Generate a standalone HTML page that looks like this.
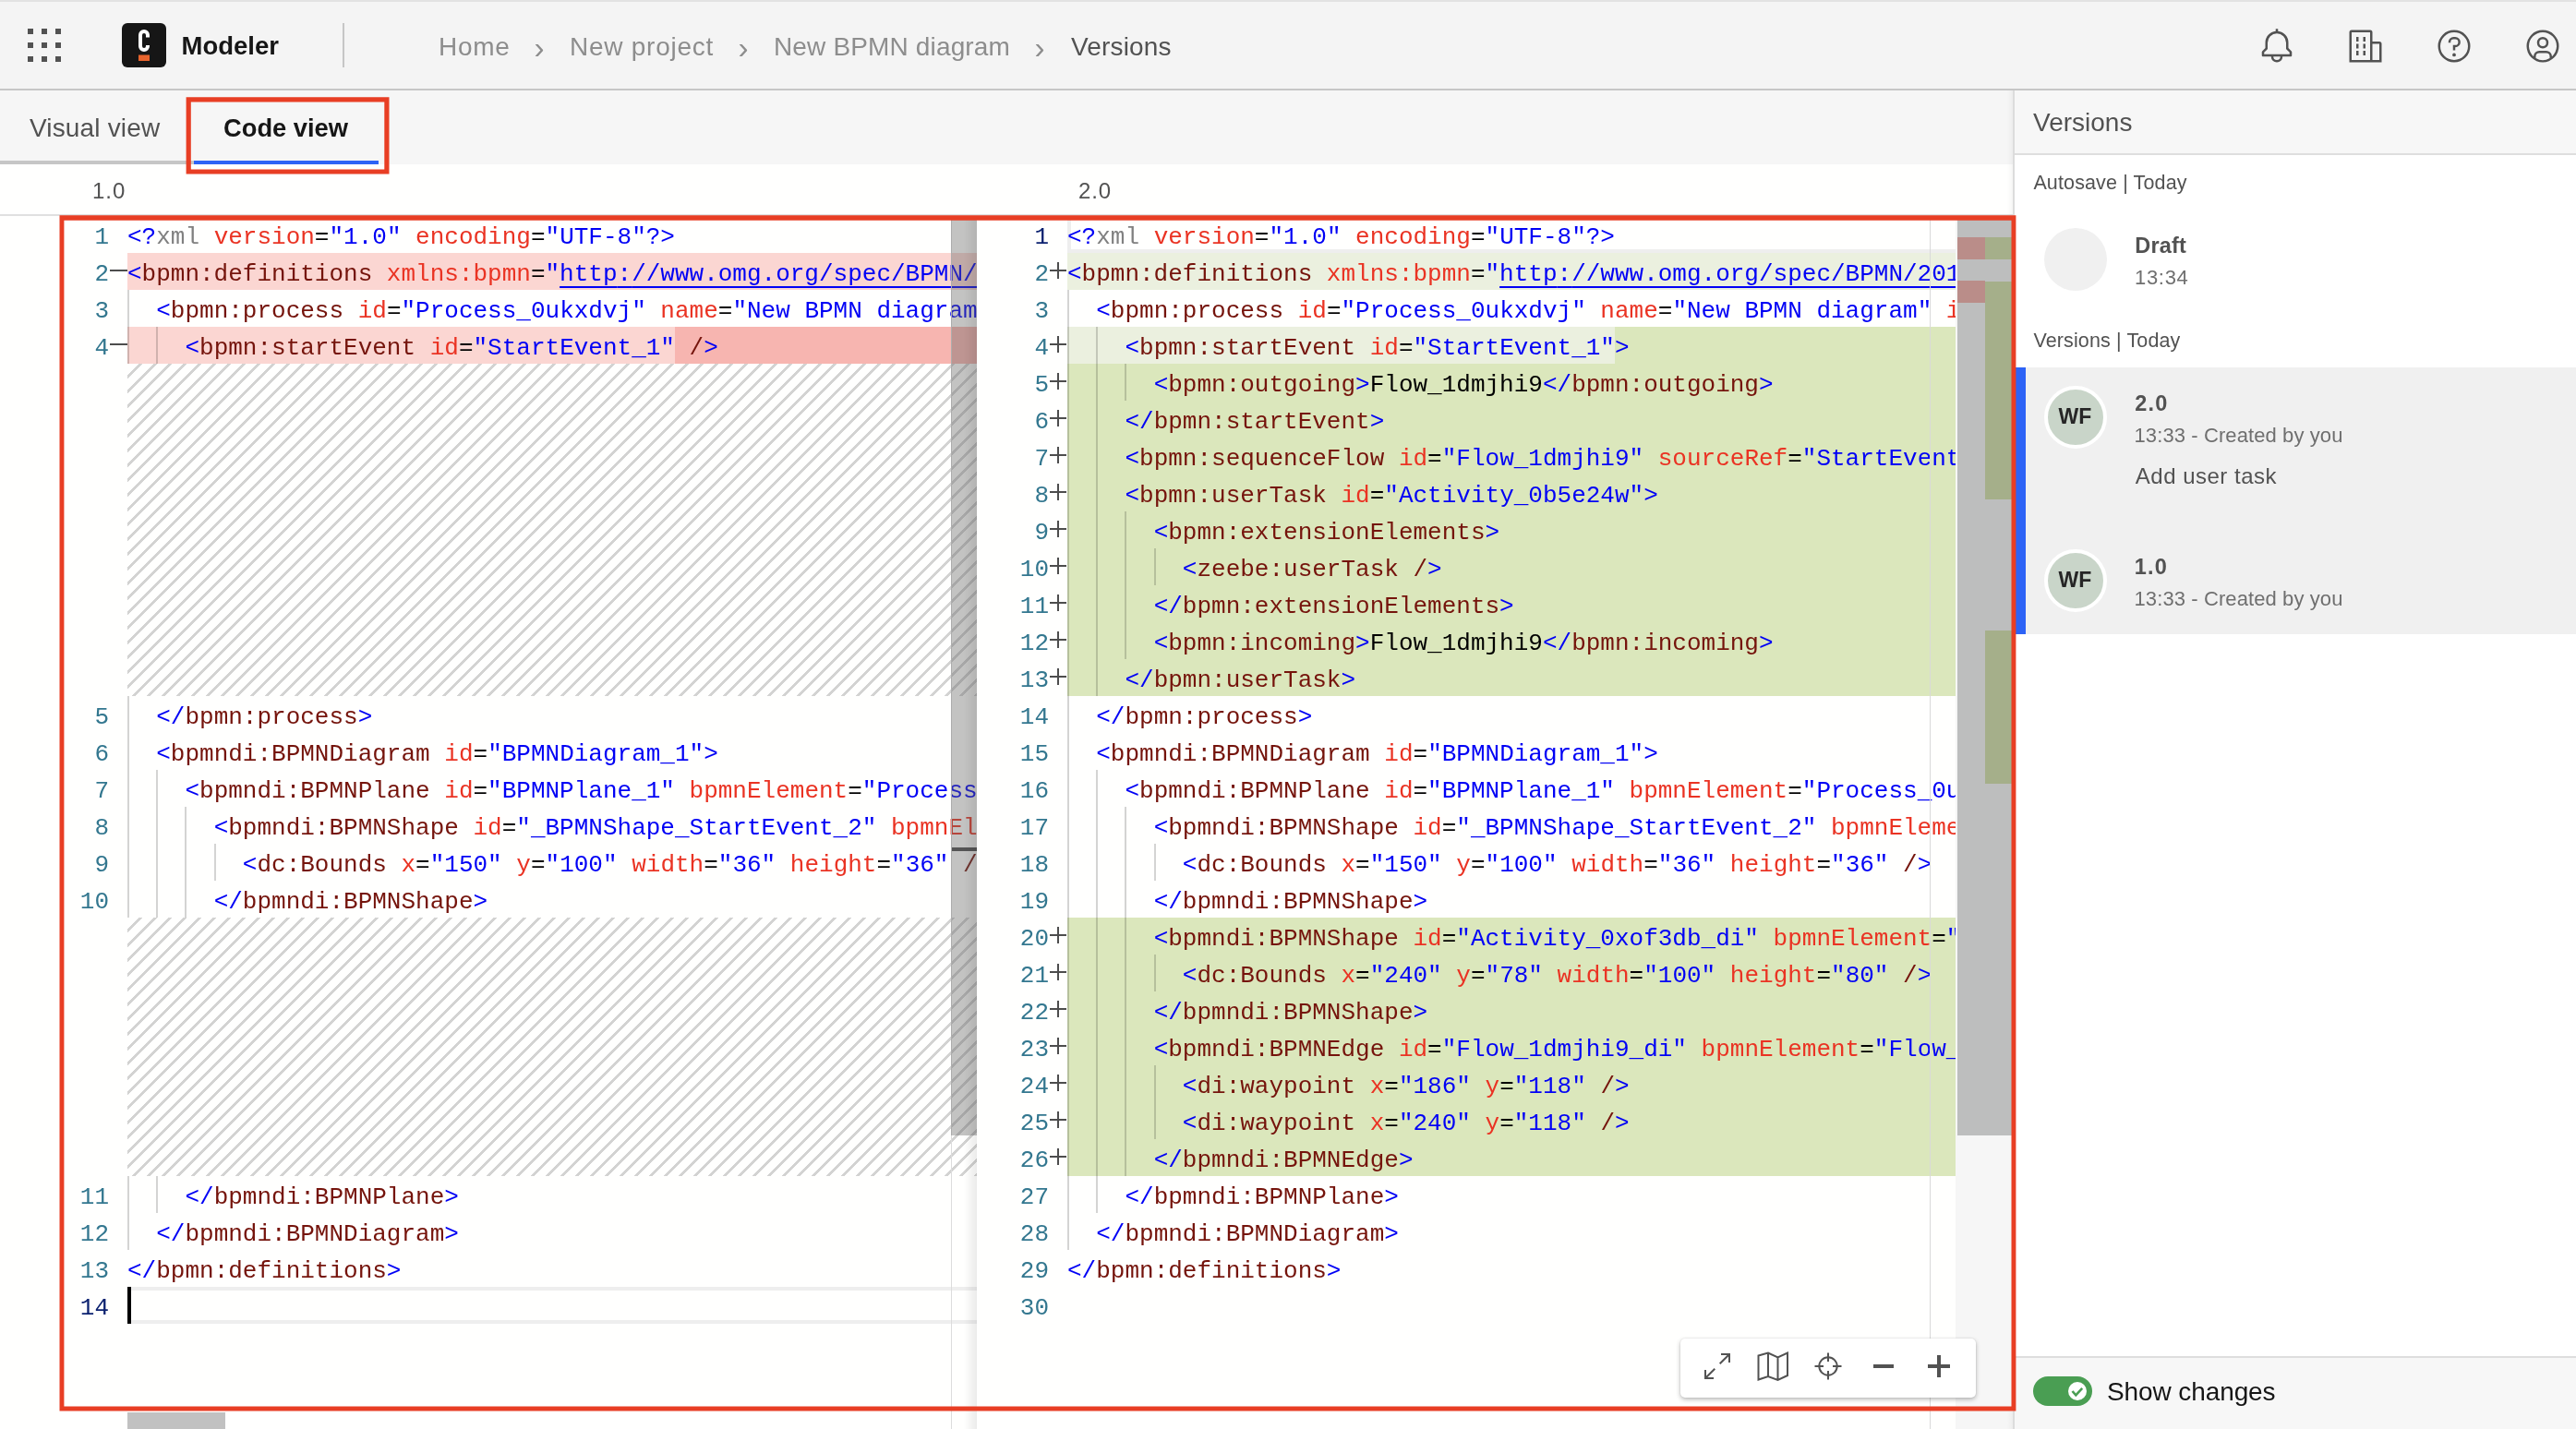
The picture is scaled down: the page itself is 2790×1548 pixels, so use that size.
<!DOCTYPE html>
<html lang="en">
<head>
<meta charset="utf-8">
<title>Modeler - Versions</title>
<style>
html,body{margin:0;padding:0}
body{width:2790px;height:1548px;overflow:hidden;position:relative;background:#fffffe;
  font-family:"Liberation Sans",sans-serif;color:#161616}
#header,#tabbar,#left,#right,#sidebar,.etitle{will-change:transform}
.abs{position:absolute}
/* header */
#topstrip{position:absolute;left:0;top:0;width:2790px;height:2px;background:#e2e2e2;z-index:5}
#header{position:absolute;left:0;top:0;width:2790px;height:96px;background:#f4f4f4;border-bottom:2px solid #c6c6c6}
#header .txt{position:absolute;top:0;height:96px;line-height:101px;font-size:28px;white-space:nowrap}
.crumb{color:#8d8d8d}
.sep{color:#8d8d8d}
/* tab bar */
#tabbar{position:absolute;left:0;top:98px;width:2181px;height:80px;background:#f6f6f6}
#tabbar .tab{position:absolute;top:0;height:76px;line-height:60px;font-size:28px;white-space:nowrap}
/* editor titles */
.etitle{position:absolute;top:190px;height:34px;line-height:34px;font-size:24px;color:#525252}
/* code */
.cl,.ln{position:absolute;height:40px;line-height:40px;font-family:"Liberation Mono",monospace;font-size:26px;white-space:pre;overflow:hidden}
.cl{padding-top:0}
.cl>span{position:relative}
.cl>span{top:3px}
.ln{text-align:right;color:#33778f}
.ln.act{color:#0b216f}
.ln{padding-top:3px;box-sizing:border-box}
.d{color:#0000f5}.t{color:#75140c}.a{color:#ea3323}.v{color:#0000f5}.m{color:#808080}.x{color:#000}
.u{text-decoration:underline;text-decoration-thickness:2px;text-underline-offset:5.5px;text-decoration-skip-ink:none}
.bg{position:absolute;height:40px}
.rl{background:#fbd6d2}
.rc{background:#f7b5b0}
.gl{background:#ebf0df}
.gc{background:#dbe7bc}
.hatch{position:absolute;background-image:linear-gradient(-45deg,rgba(34,34,34,.2) 12.5%,transparent 12.5%,transparent 50%,rgba(34,34,34,.2) 50%,rgba(34,34,34,.2) 62.5%,transparent 62.5%,transparent 100%);background-size:16px 16px}
.guide{position:absolute;width:2px;height:40px;background:rgba(0,0,0,.17)}
.curline{position:absolute;height:40px;box-sizing:border-box;border:4px solid #eeeeee;border-right:0}
.mark{position:absolute;width:18px;height:40px}
.mark::before{content:"";position:absolute;left:0;top:18px;width:100%;height:2px;background:#4d4d4d}
.mark.minus{width:19px}
.mark.plus::after{content:"";position:absolute;left:8px;top:10px;width:2px;height:18px;background:#4d4d4d}
/* red annotation boxes */
.redbox{position:absolute;box-sizing:border-box;border:5px solid #e83e24;z-index:20;pointer-events:none}
/* sidebar */
#sidebar{position:absolute;left:2180px;top:98px;width:610px;height:1450px;background:#fff}
#sidebar .st{position:absolute;white-space:nowrap;color:#525252}
</style>
</head>
<body>
<div id="header">
  <!-- app switcher -->
  <svg class="abs" style="left:24px;top:25px" width="48" height="48" viewBox="0 0 32 32" fill="#525252"><path d="M14 4h4v4h-4zM4 4h4v4H4zm20 0h4v4h-4zM14 14h4v4h-4zM4 14h4v4H4zm20 0h4v4h-4zM14 24h4v4h-4zM4 24h4v4H4zm20 0h4v4h-4z"/></svg>
  <!-- logo -->
  <svg class="abs" style="left:132px;top:25px" width="48" height="48" viewBox="0 0 48 48"><rect width="48" height="48" rx="6" fill="#161616"/><path d="M28 15.5V13a4 4 0 0 0-8 0v12a4 4 0 0 0 8 0v-1" transform="translate(0,0)" fill="none" stroke="#fff" stroke-width="4"/><rect x="18" y="34.5" width="12" height="6.5" fill="#e8642d"/></svg>
  <div class="txt" style="left:196.5px;font-weight:bold;color:#161616;font-size:27.5px;line-height:99px">Modeler</div>
  <div class="abs" style="left:371px;top:25px;width:2px;height:48px;background:#c6c6c6"></div>
  <div class="txt crumb" style="left:475px;letter-spacing:.7px">Home</div>
  <div class="txt sep" style="left:578.5px;font-size:33px;line-height:103px">›</div>
  <div class="txt crumb" style="left:617px;letter-spacing:.74px">New project</div>
  <div class="txt sep" style="left:799.5px;font-size:33px;line-height:103px">›</div>
  <div class="txt crumb" style="left:838px;letter-spacing:.15px">New BPMN diagram</div>
  <div class="txt sep" style="left:1120.5px;font-size:33px;line-height:103px">›</div>
  <div class="txt" style="left:1160px;color:#525252;letter-spacing:.15px">Versions</div>
  <!-- right icons -->
  <svg class="abs" style="left:2446px;top:30px" width="40" height="40" viewBox="0 0 32 32" fill="#525252"><path d="M28.7 20.3 26 17.6V13a10.070 10.070 0 0 0-9-10V1h-2v2a10.150 10.150 0 0 0-9 10v4.600l-2.700 2.700a.910.910 0 0 0-.3.700v3a.940.940 0 0 0 1 1h7a5 5 0 0 0 10 0h7a.940.940 0 0 0 1-1v-3a.910.910 0 0 0-.3-.700ZM16 28a3 3 0 0 1-3-3h6a3 3 0 0 1-3 3Zm11-5H5v-1.600l2.700-2.700a.910.910 0 0 0 .3-.700v-5a8 8 0 0 1 16 0v5a.910.910 0 0 0 .3.700l2.700 2.700Z"/></svg>
  <svg class="abs" style="left:2542px;top:30px" width="40" height="40" viewBox="0 0 32 32" fill="#525252"><path d="M8 8h2v4H8zm0 6h2v4H8zm6-6h2v4h-2zm0 6h2v4h-2zm-6 6h2v4H8zm6 0h2v4h-2z"/><path d="M30 14a2 2 0 0 0-2-2h-6V4a2 2 0 0 0-2-2H4a2 2 0 0 0-2 2v26h28ZM4 4h16v24H4Zm18 24V14h6v14Z"/></svg>
  <svg class="abs" style="left:2638px;top:30px" width="40" height="40" viewBox="0 0 32 32" fill="#525252"><path d="M16 2a14 14 0 1 0 14 14A14 14 0 0 0 16 2Zm0 26a12 12 0 1 1 12-12 12 12 0 0 1-12 12Z"/><circle cx="16" cy="23.5" r="1.5"/><path d="M17 8h-1.500a4.490 4.490 0 0 0-4.500 4.500v.500h2v-.500a2.500 2.500 0 0 1 2.500-2.500H17a2.500 2.500 0 0 1 0 5h-2v4.500h2V17a4.500 4.500 0 0 0 0-9Z"/></svg>
  <svg class="abs" style="left:2734px;top:30px" width="40" height="40" viewBox="0 0 32 32" fill="#525252"><path d="M16 8a5 5 0 1 0 5 5 5 5 0 0 0-5-5Zm0 8a3 3 0 1 1 3-3 3.003 3.003 0 0 1-3 3Z"/><path d="M16 2a14 14 0 1 0 14 14A14.016 14.016 0 0 0 16 2Zm-6 24.377V25a3.003 3.003 0 0 1 3-3h6a3.003 3.003 0 0 1 3 3v1.377a11.899 11.899 0 0 1-12 0Zm13.993-1.451A5.002 5.002 0 0 0 19 20h-6a5.002 5.002 0 0 0-4.992 4.926 12 12 0 1 1 15.985 0Z"/></svg>
</div>
<div id="topstrip"></div>

<div id="tabbar">
  <div class="abs" style="left:0;top:76px;width:210px;height:4px;background:#c6c6c6"></div>
  <div class="abs" style="left:210px;top:76px;width:200px;height:4px;background:#2d63f6"></div>
  <div class="tab" style="left:32px;top:11px;color:#525252;letter-spacing:.16px">Visual view</div>
  <div class="tab" style="left:242px;top:11px;color:#161616;font-weight:bold;font-size:27.3px">Code view</div>
</div>
<svg class="abs" style="left:0;top:0;z-index:20" width="2790" height="1548"><path fill="#e83e24" fill-rule="evenodd" d="M201.600 105.300H421.500V188.600H201.600ZM206.800 110.500V183.400H416.300V110.500Z"/><path fill="#e83e24" fill-rule="evenodd" d="M64.500 233.200H2183.400V1528.400H64.500ZM69.400 238.800V1523.500H2178.500V238.800Z"/></svg>

<!-- editor titles -->
<div class="etitle" style="left:99.5px;letter-spacing:1px">1.0</div>
<div class="etitle" style="left:1168px;letter-spacing:.9px">2.0</div>
<div class="abs" style="left:0;top:232px;width:2181px;height:2px;background:#e0e0e0"></div>

<!-- editors -->
<div id="left" class="abs" style="left:0;top:0;width:1058px;height:1548px;overflow:hidden">
<div class="bg rl" style="top:274px;left:138px;width:920px"></div>
<div class="bg rl" style="top:354px;left:138px;width:920px"></div>
<div class="bg rc" style="top:354px;left:730.8px;width:327.2px"></div>
<div class="hatch" style="top:394px;left:138px;width:920px;height:360px"></div>
<div class="hatch" style="top:994px;left:138px;width:920px;height:280px"></div>
<div class="curline" style="top:1394px;left:138px;width:920px"></div>
<div class="ln" style="top:234px;left:38px;width:80px">1</div>
<div class="cl" style="top:234px;left:138px;width:920px"><span class="d">&lt;?</span><span class="m">xml</span> <span class="a">version</span><span class="x">=</span><span class="v">"1.0"</span> <span class="a">encoding</span><span class="x">=</span><span class="v">"UTF-8"</span><span class="d">?&gt;</span></div>
<div class="ln" style="top:274px;left:38px;width:80px">2</div>
<div class="mark minus" style="top:274px;left:119px"></div>
<div class="cl" style="top:274px;left:138px;width:920px"><span class="d">&lt;</span><span class="t">bpmn:definitions</span> <span class="a">xmlns:bpmn</span><span class="x">=</span><span class="v">"</span><span class="v u">http<span>:</span>//www.omg.org/spec/BPMN/20100524/MODEL</span><span class="v">"</span><span class="d">&gt;</span></div>
<div class="guide" style="top:314px;left:138.0px"></div>
<div class="ln" style="top:314px;left:38px;width:80px">3</div>
<div class="cl" style="top:314px;left:138px;width:920px">  <span class="d">&lt;</span><span class="t">bpmn:process</span> <span class="a">id</span><span class="x">=</span><span class="v">"Process_0ukxdvj"</span> <span class="a">name</span><span class="x">=</span><span class="v">"New BPMN diagram"</span> <span class="a">isExecutable</span><span class="x">=</span><span class="v">"true"</span><span class="d">&gt;</span></div>
<div class="guide" style="top:354px;left:138.0px"></div>
<div class="guide" style="top:354px;left:169.2px"></div>
<div class="ln" style="top:354px;left:38px;width:80px">4</div>
<div class="mark minus" style="top:354px;left:119px"></div>
<div class="cl" style="top:354px;left:138px;width:920px">    <span class="d">&lt;</span><span class="t">bpmn:startEvent</span> <span class="a">id</span><span class="x">=</span><span class="v">"StartEvent_1"</span> <span class="t">/</span><span class="d">&gt;</span></div>
<div class="guide" style="top:754px;left:138.0px"></div>
<div class="ln" style="top:754px;left:38px;width:80px">5</div>
<div class="cl" style="top:754px;left:138px;width:920px">  <span class="d">&lt;/</span><span class="t">bpmn:process</span><span class="d">&gt;</span></div>
<div class="guide" style="top:794px;left:138.0px"></div>
<div class="ln" style="top:794px;left:38px;width:80px">6</div>
<div class="cl" style="top:794px;left:138px;width:920px">  <span class="d">&lt;</span><span class="t">bpmndi:BPMNDiagram</span> <span class="a">id</span><span class="x">=</span><span class="v">"BPMNDiagram_1"</span><span class="d">&gt;</span></div>
<div class="guide" style="top:834px;left:138.0px"></div>
<div class="guide" style="top:834px;left:169.2px"></div>
<div class="ln" style="top:834px;left:38px;width:80px">7</div>
<div class="cl" style="top:834px;left:138px;width:920px">    <span class="d">&lt;</span><span class="t">bpmndi:BPMNPlane</span> <span class="a">id</span><span class="x">=</span><span class="v">"BPMNPlane_1"</span> <span class="a">bpmnElement</span><span class="x">=</span><span class="v">"Process_0ukxdvj"</span><span class="d">&gt;</span></div>
<div class="guide" style="top:874px;left:138.0px"></div>
<div class="guide" style="top:874px;left:169.2px"></div>
<div class="guide" style="top:874px;left:200.4px"></div>
<div class="ln" style="top:874px;left:38px;width:80px">8</div>
<div class="cl" style="top:874px;left:138px;width:920px">      <span class="d">&lt;</span><span class="t">bpmndi:BPMNShape</span> <span class="a">id</span><span class="x">=</span><span class="v">"_BPMNShape_StartEvent_2"</span> <span class="a">bpmnElement</span><span class="x">=</span><span class="v">"StartEvent_1"</span><span class="d">&gt;</span></div>
<div class="guide" style="top:914px;left:138.0px"></div>
<div class="guide" style="top:914px;left:169.2px"></div>
<div class="guide" style="top:914px;left:200.4px"></div>
<div class="guide" style="top:914px;left:231.6px"></div>
<div class="ln" style="top:914px;left:38px;width:80px">9</div>
<div class="cl" style="top:914px;left:138px;width:920px">        <span class="d">&lt;</span><span class="t">dc:Bounds</span> <span class="a">x</span><span class="x">=</span><span class="v">"150"</span> <span class="a">y</span><span class="x">=</span><span class="v">"100"</span> <span class="a">width</span><span class="x">=</span><span class="v">"36"</span> <span class="a">height</span><span class="x">=</span><span class="v">"36"</span> <span class="t">/</span><span class="d">&gt;</span></div>
<div class="guide" style="top:954px;left:138.0px"></div>
<div class="guide" style="top:954px;left:169.2px"></div>
<div class="guide" style="top:954px;left:200.4px"></div>
<div class="ln" style="top:954px;left:38px;width:80px">10</div>
<div class="cl" style="top:954px;left:138px;width:920px">      <span class="d">&lt;/</span><span class="t">bpmndi:BPMNShape</span><span class="d">&gt;</span></div>
<div class="guide" style="top:1274px;left:138.0px"></div>
<div class="guide" style="top:1274px;left:169.2px"></div>
<div class="ln" style="top:1274px;left:38px;width:80px">11</div>
<div class="cl" style="top:1274px;left:138px;width:920px">    <span class="d">&lt;/</span><span class="t">bpmndi:BPMNPlane</span><span class="d">&gt;</span></div>
<div class="guide" style="top:1314px;left:138.0px"></div>
<div class="ln" style="top:1314px;left:38px;width:80px">12</div>
<div class="cl" style="top:1314px;left:138px;width:920px">  <span class="d">&lt;/</span><span class="t">bpmndi:BPMNDiagram</span><span class="d">&gt;</span></div>
<div class="ln" style="top:1354px;left:38px;width:80px">13</div>
<div class="cl" style="top:1354px;left:138px;width:920px"><span class="d">&lt;/</span><span class="t">bpmn:definitions</span><span class="d">&gt;</span></div>
<div class="ln act" style="top:1394px;left:38px;width:80px">14</div>
  <!-- cursor -->
  <div class="abs" style="left:138px;top:1394px;width:4px;height:40px;background:#000"></div>
  <!-- lane border + slider -->
  <div class="abs" style="left:1030px;top:238px;width:1px;height:1310px;background:#dcdcdc"></div>
  <div class="abs" style="left:1030px;top:238px;width:28px;height:992px;background:rgba(100,100,100,.385)"></div>
  <div class="abs" style="left:1031px;top:918px;width:27px;height:4px;background:#555"></div>
  <!-- horizontal scrollbar -->
  <div class="abs" style="left:138px;top:1530px;width:106px;height:18px;background:#c1c1c1"></div>
</div>
<div class="abs" style="left:1044px;top:238px;width:14px;height:1310px;background:linear-gradient(to right,rgba(0,0,0,0),rgba(0,0,0,.08));"></div>
<div id="right" class="abs" style="left:1058px;top:0;width:1060px;height:1548px;overflow:hidden;">
<div class="abs" style="left:-1058px;top:0;width:2118px;height:1548px">
<div class="abs" style="left:1058px;top:238px;width:1060px;height:1310px;background:#fffffe"></div>
<div class="bg gl" style="top:274px;left:1156px;width:962px"></div>
<div class="bg gl" style="top:354px;left:1156px;width:962px"></div>
<div class="bg gl" style="top:394px;left:1156px;width:962px"></div>
<div class="bg gl" style="top:434px;left:1156px;width:962px"></div>
<div class="bg gl" style="top:474px;left:1156px;width:962px"></div>
<div class="bg gl" style="top:514px;left:1156px;width:962px"></div>
<div class="bg gl" style="top:554px;left:1156px;width:962px"></div>
<div class="bg gl" style="top:594px;left:1156px;width:962px"></div>
<div class="bg gl" style="top:634px;left:1156px;width:962px"></div>
<div class="bg gl" style="top:674px;left:1156px;width:962px"></div>
<div class="bg gl" style="top:714px;left:1156px;width:962px"></div>
<div class="bg gl" style="top:994px;left:1156px;width:962px"></div>
<div class="bg gl" style="top:1034px;left:1156px;width:962px"></div>
<div class="bg gl" style="top:1074px;left:1156px;width:962px"></div>
<div class="bg gl" style="top:1114px;left:1156px;width:962px"></div>
<div class="bg gl" style="top:1154px;left:1156px;width:962px"></div>
<div class="bg gl" style="top:1194px;left:1156px;width:962px"></div>
<div class="bg gl" style="top:1234px;left:1156px;width:962px"></div>
<div class="bg gc" style="top:354px;left:1748.8px;width:369.2px"></div>
<div class="bg gc" style="top:394px;left:1156.0px;width:962.0px"></div>
<div class="bg gc" style="top:434px;left:1156.0px;width:962.0px"></div>
<div class="bg gc" style="top:474px;left:1156.0px;width:962.0px"></div>
<div class="bg gc" style="top:514px;left:1156.0px;width:962.0px"></div>
<div class="bg gc" style="top:554px;left:1156.0px;width:962.0px"></div>
<div class="bg gc" style="top:594px;left:1156.0px;width:962.0px"></div>
<div class="bg gc" style="top:634px;left:1156.0px;width:962.0px"></div>
<div class="bg gc" style="top:674px;left:1156.0px;width:962.0px"></div>
<div class="bg gc" style="top:714px;left:1156.0px;width:962.0px"></div>
<div class="bg gc" style="top:994px;left:1156.0px;width:962.0px"></div>
<div class="bg gc" style="top:1034px;left:1156.0px;width:962.0px"></div>
<div class="bg gc" style="top:1074px;left:1156.0px;width:962.0px"></div>
<div class="bg gc" style="top:1114px;left:1156.0px;width:962.0px"></div>
<div class="bg gc" style="top:1154px;left:1156.0px;width:962.0px"></div>
<div class="bg gc" style="top:1194px;left:1156.0px;width:962.0px"></div>
<div class="bg gc" style="top:1234px;left:1156.0px;width:962.0px"></div>
<div class="curline" style="top:234px;left:1156px;width:962px"></div>
<div class="ln act" style="top:234px;left:1056px;width:80px">1</div>
<div class="cl" style="top:234px;left:1156px;width:962px"><span class="d">&lt;?</span><span class="m">xml</span> <span class="a">version</span><span class="x">=</span><span class="v">"1.0"</span> <span class="a">encoding</span><span class="x">=</span><span class="v">"UTF-8"</span><span class="d">?&gt;</span></div>
<div class="ln" style="top:274px;left:1056px;width:80px">2</div>
<div class="mark plus" style="top:274px;left:1137px"></div>
<div class="cl" style="top:274px;left:1156px;width:962px"><span class="d">&lt;</span><span class="t">bpmn:definitions</span> <span class="a">xmlns:bpmn</span><span class="x">=</span><span class="v">"</span><span class="v u">http<span>:</span>//www.omg.org/spec/BPMN/20100524/MODEL</span><span class="v">"</span><span class="d">&gt;</span></div>
<div class="guide" style="top:314px;left:1156.0px"></div>
<div class="ln" style="top:314px;left:1056px;width:80px">3</div>
<div class="cl" style="top:314px;left:1156px;width:962px">  <span class="d">&lt;</span><span class="t">bpmn:process</span> <span class="a">id</span><span class="x">=</span><span class="v">"Process_0ukxdvj"</span> <span class="a">name</span><span class="x">=</span><span class="v">"New BPMN diagram"</span> <span class="a">isExecutable</span><span class="x">=</span><span class="v">"true"</span><span class="d">&gt;</span></div>
<div class="guide" style="top:354px;left:1156.0px"></div>
<div class="guide" style="top:354px;left:1187.2px"></div>
<div class="ln" style="top:354px;left:1056px;width:80px">4</div>
<div class="mark plus" style="top:354px;left:1137px"></div>
<div class="cl" style="top:354px;left:1156px;width:962px">    <span class="d">&lt;</span><span class="t">bpmn:startEvent</span> <span class="a">id</span><span class="x">=</span><span class="v">"StartEvent_1"</span><span class="d">&gt;</span></div>
<div class="guide" style="top:394px;left:1156.0px"></div>
<div class="guide" style="top:394px;left:1187.2px"></div>
<div class="guide" style="top:394px;left:1218.4px"></div>
<div class="ln" style="top:394px;left:1056px;width:80px">5</div>
<div class="mark plus" style="top:394px;left:1137px"></div>
<div class="cl" style="top:394px;left:1156px;width:962px">      <span class="d">&lt;</span><span class="t">bpmn:outgoing</span><span class="d">&gt;</span><span class="x">Flow_1dmjhi9</span><span class="d">&lt;/</span><span class="t">bpmn:outgoing</span><span class="d">&gt;</span></div>
<div class="guide" style="top:434px;left:1156.0px"></div>
<div class="guide" style="top:434px;left:1187.2px"></div>
<div class="ln" style="top:434px;left:1056px;width:80px">6</div>
<div class="mark plus" style="top:434px;left:1137px"></div>
<div class="cl" style="top:434px;left:1156px;width:962px">    <span class="d">&lt;/</span><span class="t">bpmn:startEvent</span><span class="d">&gt;</span></div>
<div class="guide" style="top:474px;left:1156.0px"></div>
<div class="guide" style="top:474px;left:1187.2px"></div>
<div class="ln" style="top:474px;left:1056px;width:80px">7</div>
<div class="mark plus" style="top:474px;left:1137px"></div>
<div class="cl" style="top:474px;left:1156px;width:962px">    <span class="d">&lt;</span><span class="t">bpmn:sequenceFlow</span> <span class="a">id</span><span class="x">=</span><span class="v">"Flow_1dmjhi9"</span> <span class="a">sourceRef</span><span class="x">=</span><span class="v">"StartEvent_1"</span> <span class="a">targetRef</span><span class="x">=</span><span class="v">"Activity_0b5e24w"</span> <span class="t">/</span><span class="d">&gt;</span></div>
<div class="guide" style="top:514px;left:1156.0px"></div>
<div class="guide" style="top:514px;left:1187.2px"></div>
<div class="ln" style="top:514px;left:1056px;width:80px">8</div>
<div class="mark plus" style="top:514px;left:1137px"></div>
<div class="cl" style="top:514px;left:1156px;width:962px">    <span class="d">&lt;</span><span class="t">bpmn:userTask</span> <span class="a">id</span><span class="x">=</span><span class="v">"Activity_0b5e24w"</span><span class="d">&gt;</span></div>
<div class="guide" style="top:554px;left:1156.0px"></div>
<div class="guide" style="top:554px;left:1187.2px"></div>
<div class="guide" style="top:554px;left:1218.4px"></div>
<div class="ln" style="top:554px;left:1056px;width:80px">9</div>
<div class="mark plus" style="top:554px;left:1137px"></div>
<div class="cl" style="top:554px;left:1156px;width:962px">      <span class="d">&lt;</span><span class="t">bpmn:extensionElements</span><span class="d">&gt;</span></div>
<div class="guide" style="top:594px;left:1156.0px"></div>
<div class="guide" style="top:594px;left:1187.2px"></div>
<div class="guide" style="top:594px;left:1218.4px"></div>
<div class="guide" style="top:594px;left:1249.6px"></div>
<div class="ln" style="top:594px;left:1056px;width:80px">10</div>
<div class="mark plus" style="top:594px;left:1137px"></div>
<div class="cl" style="top:594px;left:1156px;width:962px">        <span class="d">&lt;</span><span class="t">zeebe:userTask</span> <span class="t">/</span><span class="d">&gt;</span></div>
<div class="guide" style="top:634px;left:1156.0px"></div>
<div class="guide" style="top:634px;left:1187.2px"></div>
<div class="guide" style="top:634px;left:1218.4px"></div>
<div class="ln" style="top:634px;left:1056px;width:80px">11</div>
<div class="mark plus" style="top:634px;left:1137px"></div>
<div class="cl" style="top:634px;left:1156px;width:962px">      <span class="d">&lt;/</span><span class="t">bpmn:extensionElements</span><span class="d">&gt;</span></div>
<div class="guide" style="top:674px;left:1156.0px"></div>
<div class="guide" style="top:674px;left:1187.2px"></div>
<div class="guide" style="top:674px;left:1218.4px"></div>
<div class="ln" style="top:674px;left:1056px;width:80px">12</div>
<div class="mark plus" style="top:674px;left:1137px"></div>
<div class="cl" style="top:674px;left:1156px;width:962px">      <span class="d">&lt;</span><span class="t">bpmn:incoming</span><span class="d">&gt;</span><span class="x">Flow_1dmjhi9</span><span class="d">&lt;/</span><span class="t">bpmn:incoming</span><span class="d">&gt;</span></div>
<div class="guide" style="top:714px;left:1156.0px"></div>
<div class="guide" style="top:714px;left:1187.2px"></div>
<div class="ln" style="top:714px;left:1056px;width:80px">13</div>
<div class="mark plus" style="top:714px;left:1137px"></div>
<div class="cl" style="top:714px;left:1156px;width:962px">    <span class="d">&lt;/</span><span class="t">bpmn:userTask</span><span class="d">&gt;</span></div>
<div class="guide" style="top:754px;left:1156.0px"></div>
<div class="ln" style="top:754px;left:1056px;width:80px">14</div>
<div class="cl" style="top:754px;left:1156px;width:962px">  <span class="d">&lt;/</span><span class="t">bpmn:process</span><span class="d">&gt;</span></div>
<div class="guide" style="top:794px;left:1156.0px"></div>
<div class="ln" style="top:794px;left:1056px;width:80px">15</div>
<div class="cl" style="top:794px;left:1156px;width:962px">  <span class="d">&lt;</span><span class="t">bpmndi:BPMNDiagram</span> <span class="a">id</span><span class="x">=</span><span class="v">"BPMNDiagram_1"</span><span class="d">&gt;</span></div>
<div class="guide" style="top:834px;left:1156.0px"></div>
<div class="guide" style="top:834px;left:1187.2px"></div>
<div class="ln" style="top:834px;left:1056px;width:80px">16</div>
<div class="cl" style="top:834px;left:1156px;width:962px">    <span class="d">&lt;</span><span class="t">bpmndi:BPMNPlane</span> <span class="a">id</span><span class="x">=</span><span class="v">"BPMNPlane_1"</span> <span class="a">bpmnElement</span><span class="x">=</span><span class="v">"Process_0ukxdvj"</span><span class="d">&gt;</span></div>
<div class="guide" style="top:874px;left:1156.0px"></div>
<div class="guide" style="top:874px;left:1187.2px"></div>
<div class="guide" style="top:874px;left:1218.4px"></div>
<div class="ln" style="top:874px;left:1056px;width:80px">17</div>
<div class="cl" style="top:874px;left:1156px;width:962px">      <span class="d">&lt;</span><span class="t">bpmndi:BPMNShape</span> <span class="a">id</span><span class="x">=</span><span class="v">"_BPMNShape_StartEvent_2"</span> <span class="a">bpmnElement</span><span class="x">=</span><span class="v">"StartEvent_1"</span><span class="d">&gt;</span></div>
<div class="guide" style="top:914px;left:1156.0px"></div>
<div class="guide" style="top:914px;left:1187.2px"></div>
<div class="guide" style="top:914px;left:1218.4px"></div>
<div class="guide" style="top:914px;left:1249.6px"></div>
<div class="ln" style="top:914px;left:1056px;width:80px">18</div>
<div class="cl" style="top:914px;left:1156px;width:962px">        <span class="d">&lt;</span><span class="t">dc:Bounds</span> <span class="a">x</span><span class="x">=</span><span class="v">"150"</span> <span class="a">y</span><span class="x">=</span><span class="v">"100"</span> <span class="a">width</span><span class="x">=</span><span class="v">"36"</span> <span class="a">height</span><span class="x">=</span><span class="v">"36"</span> <span class="t">/</span><span class="d">&gt;</span></div>
<div class="guide" style="top:954px;left:1156.0px"></div>
<div class="guide" style="top:954px;left:1187.2px"></div>
<div class="guide" style="top:954px;left:1218.4px"></div>
<div class="ln" style="top:954px;left:1056px;width:80px">19</div>
<div class="cl" style="top:954px;left:1156px;width:962px">      <span class="d">&lt;/</span><span class="t">bpmndi:BPMNShape</span><span class="d">&gt;</span></div>
<div class="guide" style="top:994px;left:1156.0px"></div>
<div class="guide" style="top:994px;left:1187.2px"></div>
<div class="guide" style="top:994px;left:1218.4px"></div>
<div class="ln" style="top:994px;left:1056px;width:80px">20</div>
<div class="mark plus" style="top:994px;left:1137px"></div>
<div class="cl" style="top:994px;left:1156px;width:962px">      <span class="d">&lt;</span><span class="t">bpmndi:BPMNShape</span> <span class="a">id</span><span class="x">=</span><span class="v">"Activity_0xof3db_di"</span> <span class="a">bpmnElement</span><span class="x">=</span><span class="v">"Activity_0b5e24w"</span><span class="d">&gt;</span></div>
<div class="guide" style="top:1034px;left:1156.0px"></div>
<div class="guide" style="top:1034px;left:1187.2px"></div>
<div class="guide" style="top:1034px;left:1218.4px"></div>
<div class="guide" style="top:1034px;left:1249.6px"></div>
<div class="ln" style="top:1034px;left:1056px;width:80px">21</div>
<div class="mark plus" style="top:1034px;left:1137px"></div>
<div class="cl" style="top:1034px;left:1156px;width:962px">        <span class="d">&lt;</span><span class="t">dc:Bounds</span> <span class="a">x</span><span class="x">=</span><span class="v">"240"</span> <span class="a">y</span><span class="x">=</span><span class="v">"78"</span> <span class="a">width</span><span class="x">=</span><span class="v">"100"</span> <span class="a">height</span><span class="x">=</span><span class="v">"80"</span> <span class="t">/</span><span class="d">&gt;</span></div>
<div class="guide" style="top:1074px;left:1156.0px"></div>
<div class="guide" style="top:1074px;left:1187.2px"></div>
<div class="guide" style="top:1074px;left:1218.4px"></div>
<div class="ln" style="top:1074px;left:1056px;width:80px">22</div>
<div class="mark plus" style="top:1074px;left:1137px"></div>
<div class="cl" style="top:1074px;left:1156px;width:962px">      <span class="d">&lt;/</span><span class="t">bpmndi:BPMNShape</span><span class="d">&gt;</span></div>
<div class="guide" style="top:1114px;left:1156.0px"></div>
<div class="guide" style="top:1114px;left:1187.2px"></div>
<div class="guide" style="top:1114px;left:1218.4px"></div>
<div class="ln" style="top:1114px;left:1056px;width:80px">23</div>
<div class="mark plus" style="top:1114px;left:1137px"></div>
<div class="cl" style="top:1114px;left:1156px;width:962px">      <span class="d">&lt;</span><span class="t">bpmndi:BPMNEdge</span> <span class="a">id</span><span class="x">=</span><span class="v">"Flow_1dmjhi9_di"</span> <span class="a">bpmnElement</span><span class="x">=</span><span class="v">"Flow_1dmjhi9"</span><span class="d">&gt;</span></div>
<div class="guide" style="top:1154px;left:1156.0px"></div>
<div class="guide" style="top:1154px;left:1187.2px"></div>
<div class="guide" style="top:1154px;left:1218.4px"></div>
<div class="guide" style="top:1154px;left:1249.6px"></div>
<div class="ln" style="top:1154px;left:1056px;width:80px">24</div>
<div class="mark plus" style="top:1154px;left:1137px"></div>
<div class="cl" style="top:1154px;left:1156px;width:962px">        <span class="d">&lt;</span><span class="t">di:waypoint</span> <span class="a">x</span><span class="x">=</span><span class="v">"186"</span> <span class="a">y</span><span class="x">=</span><span class="v">"118"</span> <span class="t">/</span><span class="d">&gt;</span></div>
<div class="guide" style="top:1194px;left:1156.0px"></div>
<div class="guide" style="top:1194px;left:1187.2px"></div>
<div class="guide" style="top:1194px;left:1218.4px"></div>
<div class="guide" style="top:1194px;left:1249.6px"></div>
<div class="ln" style="top:1194px;left:1056px;width:80px">25</div>
<div class="mark plus" style="top:1194px;left:1137px"></div>
<div class="cl" style="top:1194px;left:1156px;width:962px">        <span class="d">&lt;</span><span class="t">di:waypoint</span> <span class="a">x</span><span class="x">=</span><span class="v">"240"</span> <span class="a">y</span><span class="x">=</span><span class="v">"118"</span> <span class="t">/</span><span class="d">&gt;</span></div>
<div class="guide" style="top:1234px;left:1156.0px"></div>
<div class="guide" style="top:1234px;left:1187.2px"></div>
<div class="guide" style="top:1234px;left:1218.4px"></div>
<div class="ln" style="top:1234px;left:1056px;width:80px">26</div>
<div class="mark plus" style="top:1234px;left:1137px"></div>
<div class="cl" style="top:1234px;left:1156px;width:962px">      <span class="d">&lt;/</span><span class="t">bpmndi:BPMNEdge</span><span class="d">&gt;</span></div>
<div class="guide" style="top:1274px;left:1156.0px"></div>
<div class="guide" style="top:1274px;left:1187.2px"></div>
<div class="ln" style="top:1274px;left:1056px;width:80px">27</div>
<div class="cl" style="top:1274px;left:1156px;width:962px">    <span class="d">&lt;/</span><span class="t">bpmndi:BPMNPlane</span><span class="d">&gt;</span></div>
<div class="guide" style="top:1314px;left:1156.0px"></div>
<div class="ln" style="top:1314px;left:1056px;width:80px">28</div>
<div class="cl" style="top:1314px;left:1156px;width:962px">  <span class="d">&lt;/</span><span class="t">bpmndi:BPMNDiagram</span><span class="d">&gt;</span></div>
<div class="ln" style="top:1354px;left:1056px;width:80px">29</div>
<div class="cl" style="top:1354px;left:1156px;width:962px"><span class="d">&lt;/</span><span class="t">bpmn:definitions</span><span class="d">&gt;</span></div>
<div class="ln" style="top:1394px;left:1056px;width:80px">30</div>
  <div class="abs" style="left:2090px;top:238px;width:1px;height:1310px;background:#d9d9d9"></div>
</div>
</div>
<!-- diff overview ruler -->
<div class="abs" style="left:2118px;top:238px;width:62px;height:1310px;background:#f6f6f6"></div>
<div class="abs" style="left:2120px;top:238px;width:59px;height:992px;background:#bdbebe"></div>
<div class="abs" style="left:2120px;top:257px;width:30px;height:24px;background:#ba8d89"></div>
<div class="abs" style="left:2120px;top:304px;width:30px;height:24px;background:#ba8d89"></div>
<div class="abs" style="left:2150px;top:257px;width:29px;height:24px;background:#a5af8a"></div>
<div class="abs" style="left:2150px;top:305px;width:29px;height:236px;background:#a5af8a"></div>
<div class="abs" style="left:2150px;top:683px;width:29px;height:166px;background:#a5af8a"></div>

<!-- floating toolbar -->
<div class="abs" style="left:1820px;top:1450px;width:320px;height:64px;background:#fff;border-radius:5px;box-shadow:0 2px 5px rgba(0,0,0,.28),0 0 2px rgba(0,0,0,.12);z-index:10">
  <svg class="abs" style="left:24px;top:14px" width="32" height="32" viewBox="0 0 32 32" fill="#525252"><path d="M20 2v2h6.586L18 12.582 19.414 14 28 5.414V12h2V2H20zM14 19.416 12.592 18 4 26.586V20H2v10h10v-2H5.414L14 19.416z"/></svg>
  <svg class="abs" style="left:82px;top:13px" width="36" height="34" viewBox="0 0 36 34" fill="none" stroke="#525252" stroke-width="2" stroke-linejoin="miter"><path d="M2.500 5.500L13 2.500L23.500 7.500L34 2.500V27L23.500 32L13 28L2.500 31.500Z M13 2.500V28 M23.500 7.500V32"/></svg>
  <svg class="abs" style="left:144px;top:14px" width="32" height="32" viewBox="0 0 32 32" fill="none" stroke="#525252" stroke-width="2"><circle cx="16" cy="16" r="9.700"/><path d="M16 1.500V11M16 21V30.500M1.500 16H11M21 16H30.500"/></svg>
  <div class="abs" style="left:209px;top:28px;width:22px;height:4px;background:#525252"></div>
  <div class="abs" style="left:268px;top:28px;width:24px;height:4px;background:#525252"></div>
  <div class="abs" style="left:278px;top:18px;width:4px;height:24px;background:#525252"></div>
</div>

<!-- big red annotation -->


<div class="abs" style="left:2174px;top:98px;width:6px;height:135px;background:linear-gradient(to right,rgba(0,0,0,0),rgba(0,0,0,.035))"></div>
<div class="abs" style="left:2174px;top:1529px;width:6px;height:19px;background:linear-gradient(to right,rgba(0,0,0,0),rgba(0,0,0,.035))"></div>
<!-- sidebar -->
<div id="sidebar">
<div class="abs" style="left:0;top:0;width:2px;height:1450px;background:#dcdcdc"></div>
<div class="abs" style="left:2px;top:0;width:608px;height:68px;background:#f7f7f7;border-bottom:2px solid #dedede"></div>
<div class="st" style="left:22px;top:15.30px;font-size:28px;line-height:40px;color:#525252;">Versions</div>
<div class="st" style="left:22.4px;top:79.55px;font-size:21.5px;line-height:40px;color:#525252;letter-spacing:0.13px;">Autosave | Today</div>
<div class="abs" style="left:34px;top:149px;width:68px;height:68px;border-radius:50%;background:#f0f0f0"></div>
<div class="st" style="left:132.3px;top:147.86px;font-size:23.5px;line-height:40px;color:#525252;font-weight:bold;letter-spacing:0.2px;">Draft</div>
<div class="st" style="left:132px;top:182.68px;font-size:22px;line-height:40px;color:#6f6f6f;letter-spacing:0.7px;">13:34</div>
<div class="st" style="left:22.4px;top:250.55px;font-size:21.5px;line-height:40px;color:#525252;letter-spacing:0.13px;">Versions | Today</div>
<div class="abs" style="left:3px;top:300px;width:607px;height:288.5px;background:#f0f0f0"></div>
<div class="abs" style="left:3px;top:300px;width:11px;height:288.5px;background:#2d63f6"></div>
<div class="abs" style="left:34px;top:320px;width:60px;height:60px;border-radius:50%;background:#c9d5c9;border:4px solid #fff"></div><div class="st" style="left:49.5px;top:333.43px;font-size:23px;line-height:40px;color:#262626;font-weight:bold;">WF</div>
<div class="st" style="left:132.3px;top:318.86px;font-size:23.5px;line-height:40px;color:#525252;font-weight:bold;letter-spacing:1.2px;">2.0</div>
<div class="st" style="left:131.5px;top:353.58px;font-size:22px;line-height:40px;color:#6f6f6f;letter-spacing:0.1px;">13:33 - Created by you</div>
<div class="st" style="left:132.8px;top:397.88px;font-size:24px;line-height:40px;color:#525252;letter-spacing:0.5px;">Add user task</div>
<div class="abs" style="left:34px;top:497.4px;width:60px;height:60px;border-radius:50%;background:#c9d5c9;border:4px solid #fff"></div><div class="st" style="left:49.5px;top:510.43px;font-size:23px;line-height:40px;color:#262626;font-weight:bold;">WF</div>
<div class="st" style="left:131.7px;top:495.66px;font-size:23.5px;line-height:40px;color:#525252;font-weight:bold;letter-spacing:1.2px;">1.0</div>
<div class="st" style="left:131.5px;top:530.68px;font-size:22px;line-height:40px;color:#6f6f6f;letter-spacing:0.1px;">13:33 - Created by you</div>
<!-- footer -->
<div class="abs" style="left:2px;top:1371px;width:608px;height:79px;background:#f7f7f7;border-top:2px solid #dedede"></div>
<div class="abs" style="left:22px;top:1393px;width:64px;height:32px;border-radius:16px;background:#4a9e53"></div>
<svg class="abs" style="left:60px;top:1399px" width="20" height="20" viewBox="0 0 20 20"><circle cx="10" cy="10" r="10" fill="#fff"/><path d="M4.500 10l3.800 4.300 6.900-7.500" fill="none" stroke="#4a9e53" stroke-width="2.6"/></svg>
<div class="st" style="left:102px;top:1389.90px;font-size:28px;line-height:40px;color:#161616;letter-spacing:-0.1px;">Show changes</div>
</div>

</body>
</html>
